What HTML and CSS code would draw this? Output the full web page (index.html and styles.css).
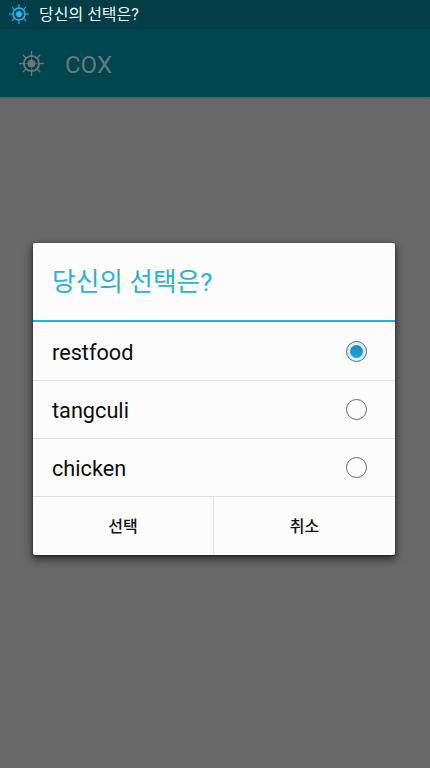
FILE: index.html
```html
<!DOCTYPE html>
<html lang="ko">
<head>
<meta charset="utf-8">
<title>COX</title>
<link rel="stylesheet" href="styles.css">
</head>
<body>
<svg class="defs" width="0" height="0" aria-hidden="true">
  <symbol id="wheel" viewBox="0 0 24 24">
    <circle cx="12" cy="12" r="7.300" fill="none" stroke="currentColor" stroke-width="1.800"/>
    <circle cx="12" cy="12" r="3.700" fill="currentColor"/>
    <path d="M12 .5V5M12 19v4.500M.5 12H5M19 12h4.500M4 4l3 3M17 17l3 3M20 4l-3 3M7 17l-3 3" fill="none" stroke="currentColor" stroke-width="1.300" stroke-linecap="round"/>
    <path d="M12 5v14M5 12h14" fill="none" stroke="currentColor" stroke-width=".6"/>
  </symbol>
</svg>
<div class="screen">
  <header class="status"><svg class="status-icon"><use href="#wheel"/></svg><span class="status-text">당신의 선택은?</span></header>
  <div class="appbar"><svg class="app-icon"><use href="#wheel"/></svg><span class="app-title">COX</span></div>
  <main class="content">
    <section class="dialog" role="dialog">
      <h1 class="title"><span class="title-text">당신의 선택은?</span></h1>
      <div class="row first"><span class="label">restfood</span><span class="radio checked"></span></div>
      <div class="row"><span class="label">tangculi</span><span class="radio"></span></div>
      <div class="row"><span class="label">chicken</span><span class="radio"></span></div>
      <div class="actions">
        <button class="action"><span>선택</span></button>
        <button class="action"><span>취소</span></button>
      </div>
    </section>
  </main>
</div>
</body>
</html>
```
FILE: styles.css
```css
* { box-sizing: border-box; }
body { margin: 0; font-family: Roboto, "Noto Sans CJK KR", sans-serif; }
.defs { display: block; }
.screen { height: 768px; display: flex; flex-direction: column; overflow: hidden; background: #696969; }
.status { height: 29px; padding: 0 0 1px 9px; display: flex; align-items: center; background: #023d48; }
.status-icon { width: 20px; height: 20px; color: #26b4ee; }
.status-text { margin-left: 10px; padding-top: 1px; font-size: 16px; line-height: 24px; color: #eefafa; white-space: nowrap; }
.appbar { height: 68px; padding: 1px 0 0 19px; display: flex; align-items: center; background: #004651; box-shadow: 0 1px 2px rgba(0, 60, 70, .25); }
.app-icon { width: 25px; height: 25px; color: #737574; }
.app-title { margin-left: 21px; padding-top: 2px; font-size: 24px; line-height: 28px; color: #6b7779; }
.content { flex: 1; padding: 146px 35px 0 33px; }
.dialog { height: 312px; background: #fcfcfc; border-radius: 2px; box-shadow: 0 4px 9px 1px rgba(0, 0, 0, .5), 0 1px 3px rgba(0, 0, 0, .5); }
.title { height: 79px; margin: 0; padding: 0 19px; display: flex; align-items: center; border-bottom: 2px solid #2ab1cf; font-size: 25.7px; font-weight: 400; line-height: 36px; color: #2ab1d5; }
.row { height: 58px; padding: 0 28px 0 19px; display: flex; align-items: center; justify-content: space-between; border-top: 1px solid #e0e0e0; }
.row.first { border-top-color: transparent; }
.label { padding-top: 2px; font-size: 21.7px; line-height: 26px; color: #0c0c0c; }
.radio { width: 21px; height: 21px; display: grid; place-items: center; border: 1px solid #666; border-radius: 50%; }
.radio.checked { background: #d5f3fb; }
.radio.checked::before { content: ""; width: 13px; height: 13px; border-radius: 50%; background: linear-gradient(#2487b8, #18a5dc); }
.actions { height: 59px; display: grid; grid-template-columns: 180px 1fr; border-top: 1px solid #e0e0e0; }
.action { margin: 0; padding: 0 0 2px; border: 0; background: none; font-family: inherit; font-size: 16px; font-weight: 500; color: #111; }
.action + .action { border-left: 1px solid #e4e4e4; }
```
